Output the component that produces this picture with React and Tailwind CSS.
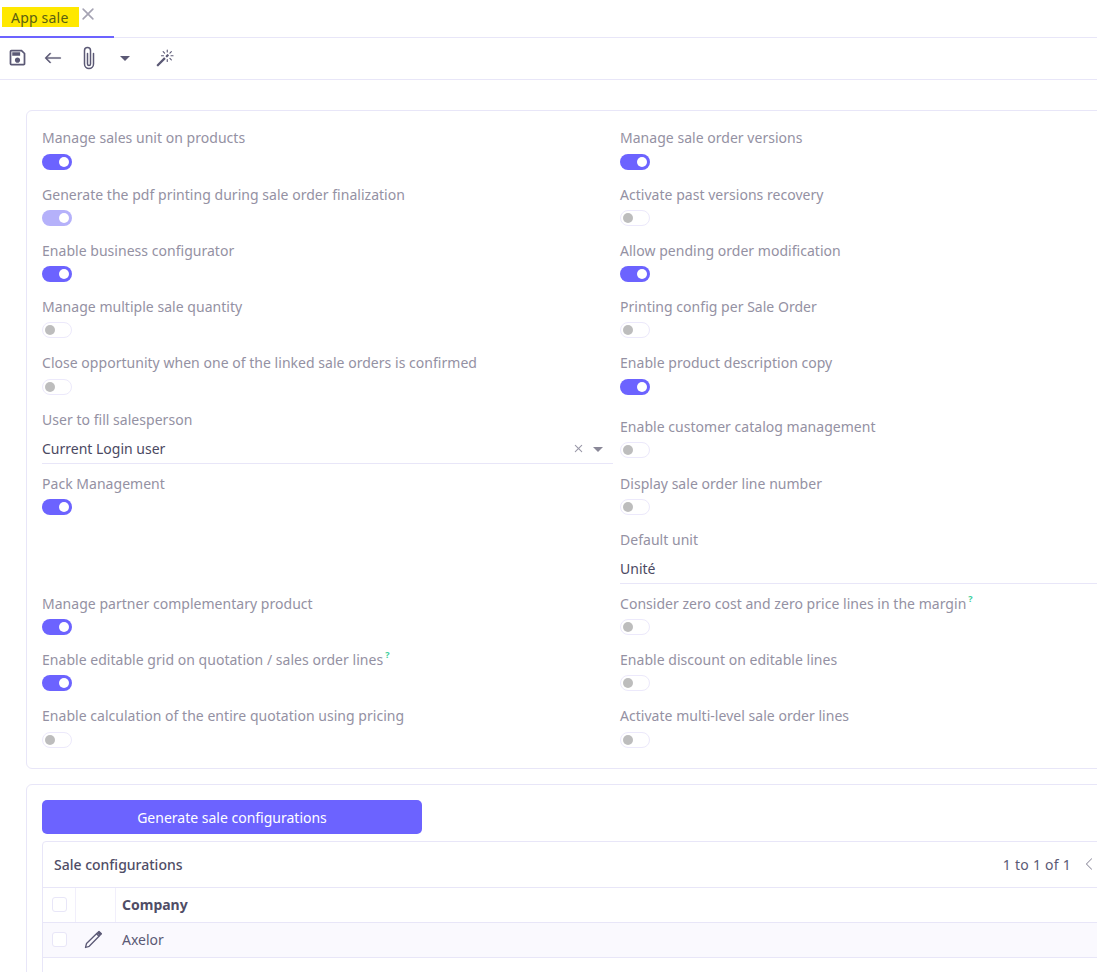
import React from "react";
import { MdOutlineSave, MdArrowDropDown } from "react-icons/md";
import { BsArrowLeft, BsPaperclip, BsMagic, BsChevronLeft, BsX } from "react-icons/bs";

function Toggle({ on, dim }) {
  if (on) {
    return (
      <div className={`flex h-[16px] w-[30px] items-center justify-end rounded-full pr-[3px] ${dim ? "bg-[#b5b1fa]" : "bg-[#6c63ff]"}`}>
        <span className="h-[10px] w-[10px] rounded-full bg-white" />
      </div>
    );
  }
  return (
    <div className="flex h-[16px] w-[30px] items-center rounded-full border border-[#ece9fb] bg-white pl-[2px]">
      <span className="h-[10px] w-[10px] rounded-full bg-[#bdbdbd]" />
    </div>
  );
}

function Label({ children, help }) {
  return (
    <div className="flex h-[21px] items-center text-[14px] leading-[21px] tracking-[0.03px] text-[#9491a3]">
      <span>{children}</span>
      {help && <sup className="relative top-[-5px] ml-[2px] text-[9px] font-bold leading-none text-[#3ecf9b]">?</sup>}
    </div>
  );
}

function Field({ label, on, dim, help, className = "" }) {
  return (
    <div className={`h-[56.25px] ${className}`}>
      <Label help={help}>{label}</Label>
      <div className="mt-[5.4px]">
        <Toggle on={on} dim={dim} />
      </div>
    </div>
  );
}

function TextField({ label, value, clear }) {
  return (
    <div className="h-[64px]">
      <Label>{label}</Label>
      <div className="mt-[7px] flex h-[24px] items-center justify-between border-b border-[#e8e6f8] pb-[2px] text-[14px] text-[#4b4962] box-content">
        <span>{value}</span>
        {clear && (
          <span className="flex items-center text-[#9a98a8]">
            <BsX className="mr-[-1px] text-[17px]" />
            <MdArrowDropDown className="mr-[3px] text-[24px] text-[#8a8898]" />
          </span>
        )}
      </div>
    </div>
  );
}

export default function App() {
  return (
    <div className="h-[972px] w-[1097px] overflow-hidden bg-white font-['Noto_Sans',sans-serif]">
      <div className="flex h-[38px] border-b border-[#e8e6f8]">
        <div className="relative flex h-[38px] w-[114px] items-start border-b-2 border-[#6c63ff] pl-[2px] pt-[7px]">
          <span className="flex h-[20px] w-[77px] items-center bg-[#ffe800] pl-[9px] text-[14px] tracking-[0.2px] text-[#5a6012]">App sale</span>
          <BsX className="ml-[-4px] mt-[-6px] text-[26px] text-[#a5a3b3]" />
        </div>
      </div>
      <div className="flex h-[42px] items-center border-b border-[#e8e6f8] pb-[2px] pl-[7px] text-[#5b5975]">
        <MdOutlineSave className="text-[21px]" />
        <BsArrowLeft className="ml-[16px] text-[18px]" strokeWidth="0.4" />
        <BsPaperclip className="ml-[15px] text-[24px]" />
        <MdArrowDropDown className="ml-[12px] text-[24px]" />
        <BsMagic className="ml-[19px] text-[18px]" />
      </div>

      <div className="ml-[26px] mt-[30px] w-[1181px] rounded-[6px] border border-[#e8e6f8] px-[15px] pt-[16.3px] pb-[6px]">
        <div className="grid grid-cols-[571px_571px] gap-x-[7px]">
          <Field label="Manage sales unit on products" on />
          <Field label="Manage sale order versions" on />
          <Field label="Generate the pdf printing during sale order finalization" on dim />
          <Field label="Activate past versions recovery" />
          <Field label="Enable business configurator" on />
          <Field label="Allow pending order modification" on />
          <Field label="Manage multiple sale quantity" />
          <Field label="Printing config per Sale Order" />
          <Field label="Close opportunity when one of the linked sale orders is confirmed" />
          <Field label="Enable product description copy" on />
          <TextField label="User to fill salesperson" value="Current Login user" clear />
          <Field label="Enable customer catalog management" className="mt-[7px]" />
          <Field label="Pack Management" on className="row-span-2" />
          <Field label="Display sale order line number" />
          <TextField label="Default unit" value="Unité" />
          <Field label="Manage partner complementary product" on />
          <Field label="Consider zero cost and zero price lines in the margin" help />
          <Field label="Enable editable grid on quotation / sales order lines" on help />
          <Field label="Enable discount on editable lines" />
          <Field label="Enable calculation of the entire quotation using pricing" />
          <Field label="Activate multi-level sale order lines" />
        </div>
      </div>

      <div className="ml-[26px] mt-[15px] w-[1181px] rounded-[6px] border border-[#e8e6f8] px-[15px] pt-[15px] pb-[40px]">
        <button className="flex h-[34px] w-[380px] items-center justify-center rounded-[5px] bg-[#6c63ff] pt-[1px] text-[14px] text-white">
          Generate sale configurations
        </button>
        <div className="mt-[7px] h-[200px] rounded-[4px] border border-[#e8e6f8]">
          <div className="flex h-[46px] items-center justify-between border-b border-[#e8e6f8] pl-[11px] pr-[94px] text-[14px]">
            <span className="font-medium text-[#4f4d66]">Sale configurations</span>
            <span className="flex items-center text-[#5b5975]">
              <span className="tracking-[0.25px]">1 to 1 of 1</span>
              <BsChevronLeft className="ml-[11px] text-[14px] text-[#8d8b9c]" />
            </span>
          </div>
          <div className="flex h-[35px] items-center border-b border-[#e8e6f8] text-[14px]">
            <div className="flex h-full w-[33px] items-center justify-center border-r border-[#f1effb]">
              <span className="h-[15px] w-[15px] rounded-[3px] border border-[#e8e6f8] bg-white" />
            </div>
            <div className="h-full w-[40px] border-r border-[#f1effb]" />
            <span className="pl-[6px] font-bold text-[#4f4d66]">Company</span>
          </div>
          <div className="flex h-[35px] items-center border-b border-[#e8e6f8] bg-[#faf9fe] text-[14px]">
            <div className="flex h-full w-[33px] items-center justify-center">
              <span className="h-[15px] w-[15px] rounded-[3px] border border-[#e8e6f8] bg-white" />
            </div>
            <div className="flex h-full w-[40px] items-center justify-center pr-[7px] text-[#5b5975]">
              <svg width="20" height="20" viewBox="0 0 20 20" fill="none" stroke="currentColor" strokeWidth="1.3" strokeLinejoin="round">
                <path d="M2.5 17.5 L3.5 13.5 L14.5 2.8 L17 5.3 L6.2 16.3 Z" />
                <path d="M13.5 3.8 L16 6.3" />
                <path d="M15.2 2.1 L16 1.5 L18.4 3.8 L17.7 4.6 Z" fill="currentColor" />
              </svg>
            </div>
            <span className="pl-[6px] text-[#5b5975]">Axelor</span>
          </div>
        </div>
      </div>
    </div>
  );
}
